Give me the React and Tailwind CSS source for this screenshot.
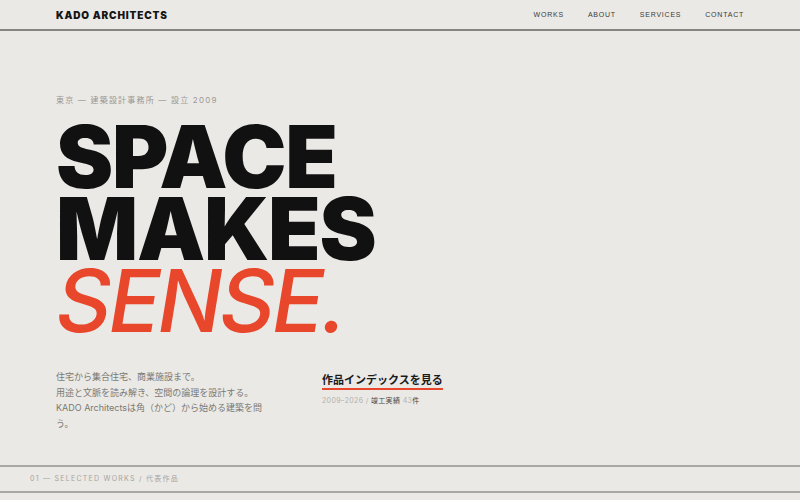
export default function App() {
  const nav = ["WORKS", "ABOUT", "SERVICES", "CONTACT"];
  const jp = { fontFamily: 'Inter, "Noto Sans CJK JP", sans-serif' };

  return (
    <div className="w-[800px] h-[500px] overflow-hidden bg-[#ebe9e5] text-[#111]" style={jp}>
      {/* Header */}
      <header className="h-[31px] flex items-center justify-between px-[56px] border-b-[2px] border-[#858480]">
        <div className="text-[10px] font-black tracking-[0.085em] text-[#151515] pt-[1px]">KADO ARCHITECTS</div>
        <nav
          className="flex gap-[24px] text-[7px] tracking-[0.11em] text-[#3a3a3a] pt-[1px]"
          style={{ fontFamily: '"Liberation Sans", Arial, sans-serif' }}
        >
          {nav.map((n) => (
            <span key={n}>{n}</span>
          ))}
        </nav>
      </header>

      {/* Hero */}
      <section className="px-[56px] pt-[63px] h-[434px]">
        <p className="text-[8px] tracking-[0.15em] text-[#9a9894]">東京 — 建築設計事務所 — 設立 2009</p>

        <h1 className="mt-[15px] text-[86px] leading-[72px] font-black tracking-[-0.015em]">
          <span className="block">SPACE</span>
          <span className="block">MAKES</span>
          <span className="block italic font-medium text-[#e8472b] tracking-[-0.035em]">SENSE.</span>
        </h1>

        <div className="mt-[32px] flex">
          <p className="w-[212px] text-[9px] leading-[15.5px] text-[#7a7874]">
            住宅から集合住宅、商業施設まで。
            <br />
            用途と文脈を読み解き、空間の論理を設計する。
            <br />
            KADO Architectsは角（かど）から始める建築を問う。
          </p>
          <div className="ml-[54px] -mt-[3px]">
            <a className="inline-block text-[11px] font-semibold text-[#1a1a1a] leading-[15px] border-b-[2px] border-[#e8472b]">
              作品インデックスを見る
            </a>
            <p className="mt-[6px] text-[7px] tracking-[0.05em] text-[#b3b1ac]">
              2009–2026 / <span className="text-[#444]">竣工実績</span> 43<span className="text-[#444]">件</span>
            </p>
          </div>
        </div>
      </section>

      {/* Section label */}
      <div className="border-t-[2px] border-b-[2px] border-[#a9a7a3] h-[28px] flex items-center px-[30px]">
        <span className="text-[7px] tracking-[0.18em] text-[#a5a39f]">01 — SELECTED WORKS / 代表作品</span>
      </div>
    </div>
  );
}
